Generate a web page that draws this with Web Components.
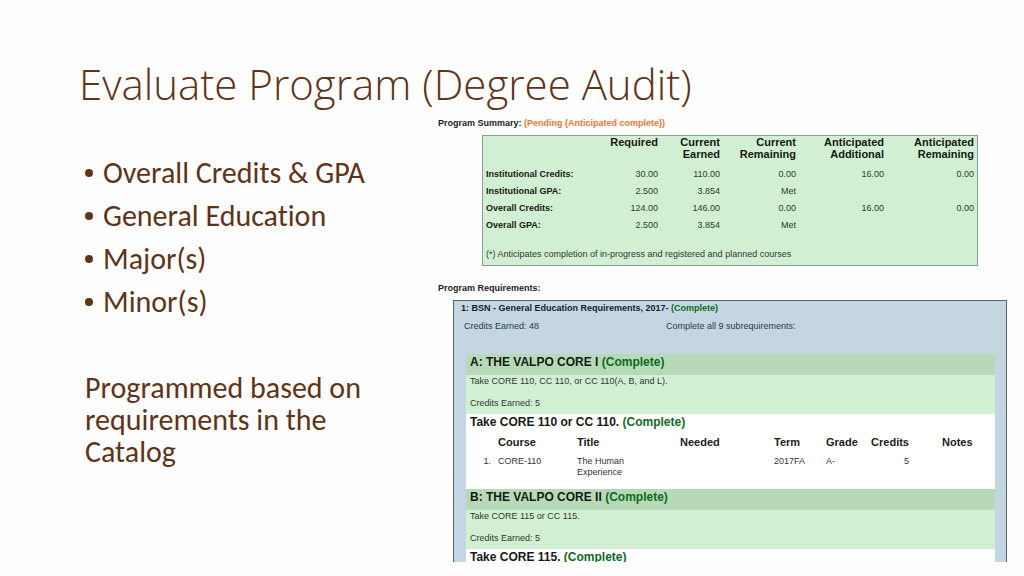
<!DOCTYPE html>
<html lang="en">
<head>
<meta charset="utf-8">
<title>Evaluate Program (Degree Audit)</title>
<style>
  body { margin: 0; background: #fefefe; font-family: "Liberation Sans", Arial, sans-serif; }
</style>
</head>
<body>
<lecture-slide>
  <span slot="title">Evaluate Program (Degree Audit)</span>
  <talking-points slot="points"></talking-points>
  <audit-report slot="figure"></audit-report>
</lecture-slide>

<template id="lecture-slide">
  <style>
    :host { display: block; }
    main {
      box-sizing: border-box; height: 100vh; padding: 54px 17px 14px 79px;
      display: grid; grid-template-rows: auto minmax(0, 1fr);
      grid-template-columns: 359fr 569fr;
    }
    h1 {
      grid-column: 1 / -1; margin: 0 0 2px; color: #5f3418;
      font: 300 42px/60px "Open Sans", "Noto Sans", sans-serif;
    }
    .figure { overflow: hidden; min-width: 0; }
  </style>
  <main>
    <h1><slot name="title"></slot></h1>
    <slot name="points"></slot>
    <div class="figure"><slot name="figure"></slot></div>
  </main>
</template>

<template id="talking-points">
  <style>
    :host {
      display: block; padding: 41px 40px 0 6px; color: #5f3418;
      font: 400 30px/32px Carlito, Calibri, Lato, sans-serif;
      font-variant-ligatures: none;
    }
    ul { margin: 0 0 54px; padding: 0; list-style: none; display: grid; gap: 11px; }
    li { display: flex; align-items: center; gap: 10px; }
    li::before { content: ""; width: 8px; height: 8px; border-radius: 50%; background: currentColor; flex: none; }
    p { margin: 0; }
  </style>
  <ul>
    <li>Overall Credits &amp; GPA</li>
    <li>General Education</li>
    <li>Major(s)</li>
    <li>Minor(s)</li>
  </ul>
  <p>Programmed based on requirements in the Catalog</p>
</template>

<template id="audit-report">
  <style>
    :host { display: block; }
    h2 { margin: 0 0 6px; font-size: 9px; line-height: 12px; color: #1c1c1c; }
    h2 em { font-style: normal; color: #ee7433; }
    section { padding-top: 1px; }
    credit-summary { margin: 0 29px 16px 44px; }
    requirement-block { margin-left: 15px; }
  </style>
  <section>
    <h2>Program Summary: <em>(Pending (Anticipated complete))</em></h2>
    <credit-summary></credit-summary>
    <h2>Program Requirements:</h2>
    <requirement-block>
      <span slot="name">1: BSN - General Education Requirements, 2017-</span>
      <span slot="earned">Credits Earned: 48</span>
      <span slot="rule">Complete all 9 subrequirements:</span>
      <sub-requirement>
        <span slot="name">A: THE VALPO CORE I</span>
        <span slot="rule">Take CORE 110, CC 110, or CC 110(A, B, and L).</span>
        <span slot="earned">Credits Earned: 5</span>
        <span slot="task">Take CORE 110 or CC 110.</span>
        <course-table></course-table>
      </sub-requirement>
      <sub-requirement>
        <span slot="name">B: THE VALPO CORE II</span>
        <span slot="rule">Take CORE 115 or CC 115.</span>
        <span slot="earned">Credits Earned: 5</span>
        <span slot="task">Take CORE 115.</span>
      </sub-requirement>
    </requirement-block>
  </section>
</template>

<template id="credit-summary">
  <style>
    :host { display: block; border: 1px solid #8d9f90; background: #d1efd3; }
    table { width: 100%; table-layout: fixed; border-collapse: collapse; font-size: 9px; line-height: 12px; color: #2f3a30; }
    th, td { padding: 0 3px; text-align: right; }
    thead th { height: 29px; font-size: 11px; vertical-align: top; color: #141a14; }
    tbody th, tbody td { height: 17px; }
    tbody th, tfoot td { text-align: left; white-space: nowrap; }
    tbody th { color: #141a14; }
    tfoot td { height: 22px; padding-top: 10px; }
  </style>
  <table>
    <colgroup><col style="width:108px"><col style="width:70px"><col style="width:62px"><col style="width:76px"><col style="width:88px"><col style="width:90px"></colgroup>
    <thead>
      <tr><td></td><th scope="col">Required</th><th scope="col">Current Earned</th><th scope="col">Current Remaining</th><th scope="col">Anticipated Additional</th><th scope="col">Anticipated Remaining</th></tr>
    </thead>
    <tbody>
      <tr><th scope="row">Institutional Credits:</th><td>30.00</td><td>110.00</td><td>0.00</td><td>16.00</td><td>0.00</td></tr>
      <tr><th scope="row">Institutional GPA:</th><td>2.500</td><td>3.854</td><td>Met</td><td></td><td></td></tr>
      <tr><th scope="row">Overall Credits:</th><td>124.00</td><td>146.00</td><td>0.00</td><td>16.00</td><td>0.00</td></tr>
      <tr><th scope="row">Overall GPA:</th><td>2.500</td><td>3.854</td><td>Met</td><td></td><td></td></tr>
    </tbody>
    <tfoot>
      <tr><td colspan="6">(*) Anticipates completion of in-progress and registered and planned courses</td></tr>
    </tfoot>
  </table>
</template>

<template id="requirement-block">
  <style>
    :host { display: block; border: 1px solid #50676b; background: #c4d6e2; padding: 1px 11px 0 12px; }
    h3 { margin: 0 0 6px -5px; font-size: 9px; line-height: 12px; color: #16222b; }
    em { font-style: normal; color: #0c6b1c; }
    .meta { display: grid; grid-template-columns: 202fr 329fr; margin-left: -2px; padding-bottom: 22px; font-size: 9px; line-height: 12px; color: #2d3b46; }
  </style>
  <h3><slot name="name"></slot> <em>(Complete)</em></h3>
  <div class="meta"><slot name="earned"></slot><slot name="rule"></slot></div>
  <slot></slot>
</template>

<template id="sub-requirement">
  <style>
    :host { display: block; background: #fff; }
    h4, h5 { margin: 0; padding-left: 4px; font-size: 12px; line-height: 17px; color: #141a14; }
    h4 { background: #b7d9b7; padding-bottom: 4px; }
    em { font-style: normal; color: #0c6b1c; }
    .detail { display: grid; gap: 10px; padding: 0 4px 5px; background: #d1efd3; font-size: 9px; line-height: 12px; color: #2f3a30; }
  </style>
  <h4><slot name="name"></slot> <em>(Complete)</em></h4>
  <div class="detail"><slot name="rule"></slot><slot name="earned"></slot></div>
  <h5><slot name="task"></slot> <em>(Complete)</em></h5>
  <slot></slot>
</template>

<template id="course-table">
  <style>
    :host { display: block; padding-bottom: 11px; }
    table { width: 100%; table-layout: fixed; border-collapse: collapse; font-size: 9px; line-height: 11px; color: #333; }
    th, td { padding: 0; text-align: left; vertical-align: top; }
    th { height: 23px; font-size: 11px; vertical-align: middle; color: #1c1c1c; }
    td { padding-top: 2px; }
    .index { text-align: right; padding-right: 7px; }
    .number { text-align: right; }
    .title { padding-right: 40px; }
    .notes { padding-left: 33px; }
  </style>
  <table>
    <colgroup><col style="width:32px"><col style="width:79px"><col style="width:103px"><col style="width:94px"><col style="width:52px"><col style="width:42px"><col style="width:41px"><col style="width:86px"></colgroup>
    <thead>
      <tr><td></td><th scope="col">Course</th><th scope="col">Title</th><th scope="col">Needed</th><th scope="col">Term</th><th scope="col">Grade</th><th scope="col" class="number">Credits</th><th scope="col" class="notes">Notes</th></tr>
    </thead>
    <tbody>
      <tr><td class="index">1.</td><td>CORE-110</td><td class="title">The Human Experience</td><td></td><td>2017FA</td><td>A-</td><td class="number">5</td><td></td></tr>
    </tbody>
  </table>
</template>

<script>
  class TemplateElement extends HTMLElement {
    constructor() {
      super();
      const template = document.getElementById(this.localName);
      this.attachShadow({ mode: "open" }).append(template.content.cloneNode(true));
    }
  }
  for (const name of ["course-table", "sub-requirement", "requirement-block", "credit-summary", "audit-report", "talking-points", "lecture-slide"]) {
    customElements.define(name, class extends TemplateElement {});
  }
</script>
</body>
</html>
